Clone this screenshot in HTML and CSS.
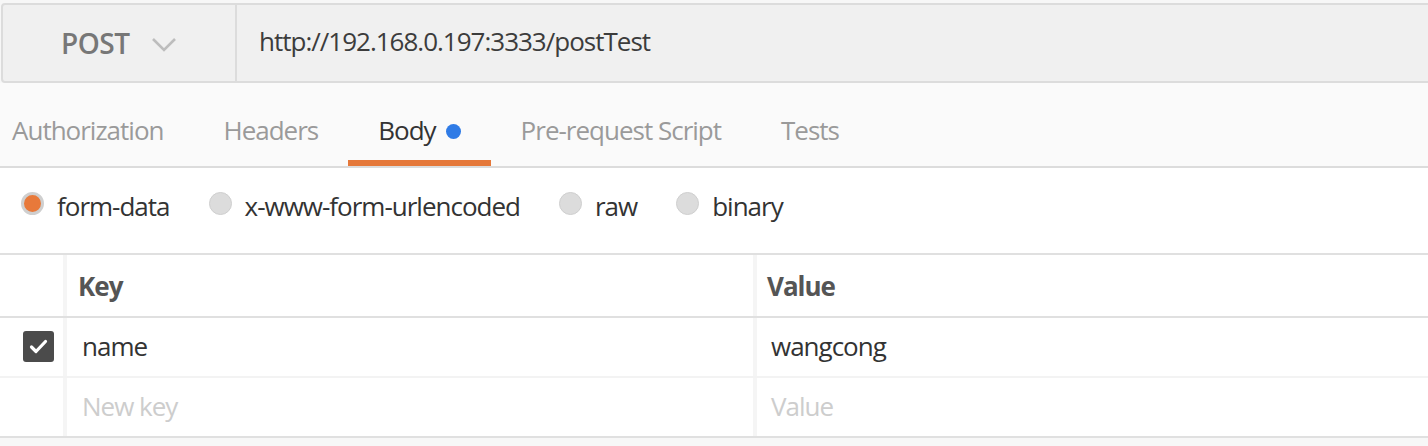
FILE: index.html
```html
<!DOCTYPE html>
<html>
<head>
<meta charset="utf-8">
<link rel="stylesheet" href="styles.css">
</head>
<body>
<div class="url-bar">
  <div class="method">
    <span class="method-name">POST</span>
    <svg class="chevron" width="26" height="15" viewBox="0 0 26 15"><polyline points="2,2 13,13 24,2" fill="none" stroke="#bdbdbd" stroke-width="2.6"/></svg>
  </div>
  <div class="url">http://192.168.0.197:3333/postTest</div>
</div>
<nav class="tabs">
  <div class="tab first">Authorization</div>
  <div class="tab">Headers</div>
  <div class="tab active">Body <span class="dot"></span></div>
  <div class="tab">Pre-request Script</div>
  <div class="tab">Tests</div>
</nav>
<div class="body-types">
  <label class="radio-item"><span class="radio checked"></span>form-data</label>
  <label class="radio-item"><span class="radio"></span>x-www-form-urlencoded</label>
  <label class="radio-item"><span class="radio"></span>raw</label>
  <label class="radio-item"><span class="radio"></span>binary</label>
</div>
<div class="kv">
  <div class="kv-row head">
    <div class="cell check"></div>
    <div class="cell key">Key</div>
    <div class="cell value">Value</div>
  </div>
  <div class="kv-row">
    <div class="cell check"><span class="checkbox"><svg width="19" height="15" viewBox="0 0 19 15"><polyline points="2.5,8 7,12.5 16.5,2.5" fill="none" stroke="#fff" stroke-width="3.2" stroke-linecap="round" stroke-linejoin="round"/></svg></span></div>
    <div class="cell key">name</div>
    <div class="cell value">wangcong</div>
  </div>
  <div class="kv-row last">
    <div class="cell check"></div>
    <div class="cell key placeholder">New key</div>
    <div class="cell value placeholder">Value</div>
  </div>
</div>
</body>
</html>
```
FILE: styles.css
```css
* { box-sizing: border-box; }
html, body {
  margin: 0;
  padding: 0;
  background: #f7f7f7;
}
body {
  font-family: "Open Sans", "Liberation Sans", sans-serif;
  font-size: 26px;
  letter-spacing: -1px;
  color: #333;
  overflow: hidden;
  width: 1428px;
  height: 446px;
}
.url-bar {
  display: flex;
  margin: 3px -10px 0 1px;
  height: 80px;
  border: 2px solid #dcdcdc;
  border-radius: 4px;
  background: #f0f0f0;
}
.method {
  width: 234px;
  flex: none;
  display: flex;
  align-items: center;
  padding-left: 58px;
  border-right: 2px solid #dcdcdc;
}
.method-name {
  font-weight: 600;
  color: #777;
  font-size: 28px;
  letter-spacing: -0.5px;
}
.chevron {
  margin-left: 22px;
  margin-top: 2px;
}
.url {
  display: flex;
  align-items: center;
  padding-left: 22px;
  padding-bottom: 4px;
  color: #3c3c3c;
}
.tabs {
  display: flex;
  height: 85px;
  padding-left: 12px;
  background: #fafafa;
  border-bottom: 2px solid #dcdcdc;
}
.tab {
  display: flex;
  align-items: center;
  padding: 17px 30px 0;
  color: #9a9a9a;
  border-bottom: 6px solid transparent;
}
.tab.first { padding-left: 0; }
.tab.active {
  color: #333;
  border-bottom-color: #e5783a;
}
.dot {
  display: inline-block;
  width: 15px;
  height: 15px;
  border-radius: 50%;
  background: #2f7be6;
  margin-left: 10px;
  margin-top: 2px;
}
.body-types {
  display: flex;
  align-items: center;
  height: 87px;
  padding-left: 21px;
  padding-bottom: 9px;
  background: #fff;
  border-bottom: 2px solid #e0e0e0;
}
.radio-item {
  display: flex;
  align-items: center;
  margin-right: 39px;
  color: #333;
}
.radio {
  width: 23px;
  height: 23px;
  border-radius: 50%;
  background: #dcdcdc;
  border: 1px solid #cfcfcf;
  margin-right: 13px;
  margin-top: -6px;
}
.radio.checked {
  background: #e8793a;
  border: 3px solid #cfcfcf;
}
.kv {
  background: #fff;
}
.kv-row {
  display: flex;
  height: 60px;
  border-bottom: 2px solid #f3f3f3;
}
.kv-row.head {
  height: 63px;
  border-bottom-color: #e0e0e0;
  font-weight: 700;
  color: #555;
}
.kv-row.last {
  border-bottom-color: #e0e0e0;
}
.cell {
  display: flex;
  align-items: center;
  border-right: 4px solid #f5f5f5;
}
.cell.check {
  width: 67px;
  padding-left: 23px;
}
.cell.key {
  width: 690px;
  padding-left: 11px;
}
.cell.value {
  flex: 1;
  border-right: none;
  padding-left: 14px;
}
.head .cell.value { padding-left: 10px; }
.kv-row:not(.head) .cell { padding-bottom: 2px; }
.kv-row:not(.head) .cell.key { padding-left: 15px; }
.placeholder { color: #cdcdcd; }
.checkbox {
  width: 31px;
  height: 31px;
  border-radius: 3px;
  background: #4b4b4b;
  display: flex;
  align-items: center;
  justify-content: center;
}
```
